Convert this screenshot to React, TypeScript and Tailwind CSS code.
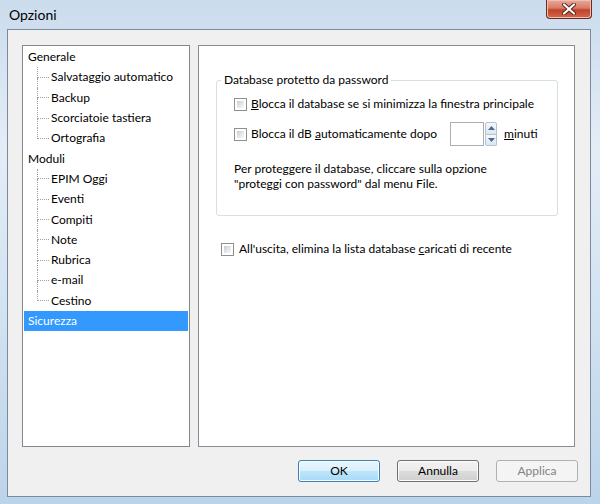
import type { ReactNode } from "react";

const font = { fontFamily: '"Lato", "Noto Sans", sans-serif' };

type Node = { label: string; children?: string[] };

const tree: Node[] = [
  { label: "Generale", children: ["Salvataggio automatico", "Backup", "Scorciatoie tastiera", "Ortografia"] },
  { label: "Moduli", children: ["EPIM Oggi", "Eventi", "Compiti", "Note", "Rubrica", "e-mail", "Cestino"] },
  { label: "Sicurezza" },
];

function Checkbox() {
  return (
    <div className="w-[13px] h-[13px] shrink-0 border border-[#8e8f8f] bg-white p-[2px]">
      <div className="w-full h-full bg-[linear-gradient(135deg,#c8ccd2_0%,#e8eaec_60%,#f6f6f6_100%)]" />
    </div>
  );
}

function Connector({ last }: { last: boolean }) {
  return (
    <div className="w-[12px] h-full flex flex-col ml-[13px]">
      <div className="flex-1 border-l border-b border-dotted border-[#a0a0a0]" />
      <div className={`flex-1 ${last ? "" : "border-l border-dotted border-[#a0a0a0]"}`} />
    </div>
  );
}

function Button({ children, variant }: { children: ReactNode; variant: "default" | "normal" | "disabled" }) {
  const cls =
    variant === "default"
      ? "border-[#3c7fb1] bg-[linear-gradient(180deg,#eaf6fd_0%,#d9f0fc_50%,#bee6fd_50%,#a7d9f5_100%)] text-black shadow-[inset_0_0_0_1px_#f8fcff]"
      : variant === "normal"
      ? "border-[#707070] bg-[linear-gradient(180deg,#f2f2f2_0%,#ebebeb_50%,#dddddd_50%,#cfcfcf_100%)] text-black shadow-[inset_0_0_0_1px_#fcfcfc]"
      : "border-[#adb2b5] bg-[#f4f4f4] text-[#838383]";
  return (
    <div className={`w-[82px] h-[22px] rounded-[3px] border flex items-center justify-center text-[12px] ${cls}`}>
      {children}
    </div>
  );
}

export default function App() {
  return (
    <div
      style={font}
      className="w-[600px] h-[504px] flex flex-col pl-[7px] pr-[9px] pb-[7px] bg-[linear-gradient(180deg,#cbdced_0%,#e4edf6_30%,#d3e3f1_60%,#bcd4ea_100%)] text-black"
    >
      {/* Title bar */}
      <div className="h-[29px] flex items-start justify-between">
        <div className="mt-[6px] ml-[2px] text-[14px] leading-[18px] text-black">Opzioni</div>
        <div className="w-[46px] h-[19px] mr-[-1px] rounded-b-[4px] border border-t-0 border-[#6b2a1f] bg-[linear-gradient(180deg,#e9a99b_0%,#d77b66_45%,#c2432b_55%,#d2684c_100%)] flex items-center justify-center shadow-[inset_0_0_0_1px_#f0c0b4]">
          <svg width="14" height="12" viewBox="0 0 14 12">
            <path d="M2 1.5 L12 10.5 M12 1.5 L2 10.5" stroke="#5a2217" strokeWidth="4" strokeLinecap="round" />
            <path d="M2 1.5 L12 10.5 M12 1.5 L2 10.5" stroke="#ffffff" strokeWidth="2.2" strokeLinecap="round" />
          </svg>
        </div>
      </div>

      {/* Client area */}
      <div className="flex-1 flex flex-col border border-[#7b8a9c] bg-[#f0f0f0] pt-[15px] pl-[14px] pr-[15px] pb-[14px]">
        <div className="flex gap-[8px]">
          {/* Tree */}
          <div className="w-[168px] h-[402px] border border-[#828790] bg-white pt-[1px] px-[1px] text-[12px]">
            {tree.map((node) => (
              <div key={node.label}>
                <div
                  className={`h-[20.3px] flex items-center pl-[4px] ${
                    node.label === "Sicurezza" ? "bg-[#3399ff] text-white" : ""
                  }`}
                >
                  {node.label}
                </div>
                {node.children?.map((c, i) => (
                  <div key={c} className="h-[20.3px] flex items-center">
                    <Connector last={i === node.children!.length - 1} />
                    <span className="ml-[2px]">{c}</span>
                  </div>
                ))}
              </div>
            ))}
          </div>

          {/* Page */}
          <div className="flex-1 h-[402px] border border-[#898c95] bg-white pl-[17px] pr-[16px] text-[12px]">
            <fieldset className="mt-[26px] border border-[#d5dfe5] rounded-[3px] px-0 pb-[24px]">
              <legend className="ml-[4px] px-[3px] leading-[16px]">Database protetto da password</legend>
              <div className="pl-[17px]">
                <div className="mt-[8px] h-[16px] flex items-center gap-[4px]">
                  <Checkbox />
                  <span>
                    <u>B</u>locca il database se si minimizza la finestra principale
                  </span>
                </div>
                <div className="mt-[10px] h-[24px] flex items-center">
                  <Checkbox />
                  <span className="ml-[4px] w-[199px]">
                    Blocca il dB <u>a</u>utomaticamente dopo
                  </span>
                  <div className="w-[34px] h-[24px] border border-[#abadb3] bg-white" />
                  <div className="ml-[1px] w-[12px] h-[24px] flex flex-col">
                    <div className="flex-1 border border-[#b5c2cf] rounded-t-[2px] bg-[linear-gradient(180deg,#f6f9fc,#dce6f0)] flex items-center justify-center">
                      <svg width="7" height="4" viewBox="0 0 7 4">
                        <path d="M0 4 L3.5 0 L7 4 Z" fill="#4a6b8e" />
                      </svg>
                    </div>
                    <div className="flex-1 border border-t-0 border-[#b5c2cf] rounded-b-[2px] bg-[linear-gradient(180deg,#f6f9fc,#dce6f0)] flex items-center justify-center">
                      <svg width="7" height="4" viewBox="0 0 7 4">
                        <path d="M0 0 L3.5 4 L7 0 Z" fill="#4a6b8e" />
                      </svg>
                    </div>
                  </div>
                  <span className="ml-[7px]">
                    <u>m</u>inuti
                  </span>
                </div>
                <p className="mt-[15px] leading-[15px]">
                  Per proteggere il database, cliccare sulla opzione
                  <br />
                  "proteggi con password" dal menu File.
                </p>
              </div>
            </fieldset>
            <div className="mt-[25px] ml-[5px] h-[16px] flex items-center gap-[5px]">
              <Checkbox />
              <span>
                All'uscita, elimina la lista database <u>c</u>aricati di recente
              </span>
            </div>
          </div>
        </div>

        {/* Buttons */}
        <div className="mt-[13px] flex justify-end gap-[17px] mr-[-3px]">
          <Button variant="default">OK</Button>
          <Button variant="normal">Annulla</Button>
          <Button variant="disabled">Applica</Button>
        </div>
      </div>
    </div>
  );
}
